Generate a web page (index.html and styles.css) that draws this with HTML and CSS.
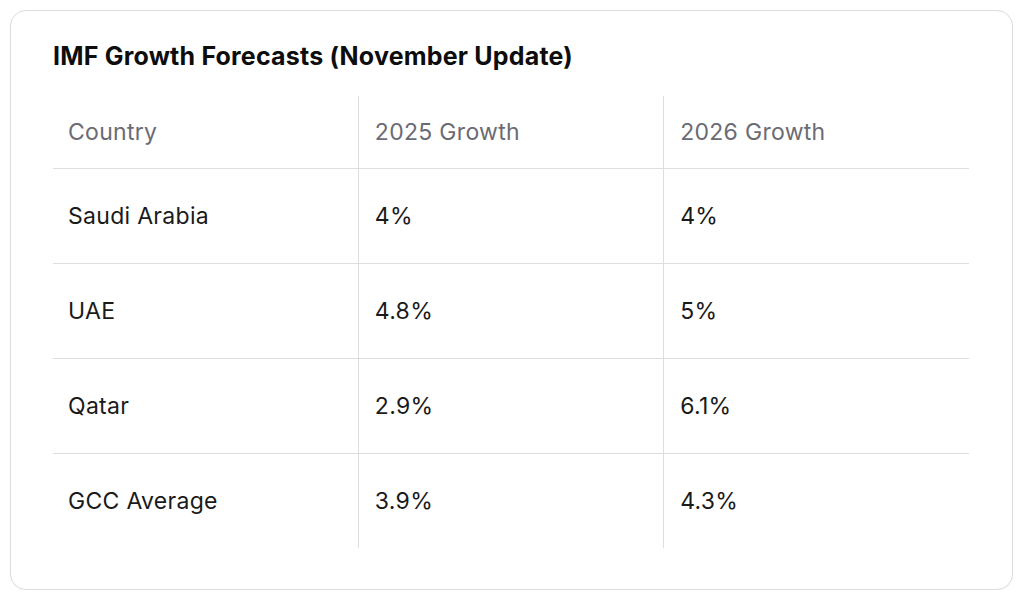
FILE: index.html
```html
<!DOCTYPE html>
<html lang="en">
<head>
<meta charset="utf-8">
<title>IMF Growth Forecasts</title>
<link rel="stylesheet" href="styles.css">
</head>
<body>
  <div class="card">
    <h2 class="title">IMF Growth Forecasts (November Update)</h2>
    <table class="data">
      <thead>
        <tr>
          <th>Country</th>
          <th>2025 Growth</th>
          <th>2026 Growth</th>
        </tr>
      </thead>
      <tbody>
        <tr><td>Saudi Arabia</td><td>4%</td><td>4%</td></tr>
        <tr><td>UAE</td><td>4.8%</td><td>5%</td></tr>
        <tr><td>Qatar</td><td>2.9%</td><td>6.1%</td></tr>
        <tr><td>GCC Average</td><td>3.9%</td><td>4.3%</td></tr>
      </tbody>
    </table>
  </div>
</body>
</html>
```
FILE: styles.css
```css
html, body {
  margin: 0;
  padding: 0;
  background: #ffffff;
}
body {
  font-family: Inter, "Noto Sans", "Liberation Sans", sans-serif;
  color: #1a1a1a;
}
.card {
  box-sizing: border-box;
  margin: 10px 0 0 10px;
  width: 1003px;
  height: 580px;
  border: 1.5px solid #dcdcdc;
  border-radius: 16px;
  padding: 29px 43px 0 42px;
  box-shadow: 0 1px 2px rgba(0,0,0,0.04);
}
.title {
  margin: 0 0 24px 0;
  font-size: 25px;
  line-height: 32px;
  font-weight: 700;
  color: #0d0d0d;
  letter-spacing: 0.2px;
}
.data {
  width: 916px;
  border-collapse: collapse;
  table-layout: fixed;
}
.data th, .data td {
  text-align: left;
  padding: 0 0 0 15px;
  font-size: 23px;
  line-height: 28px;
  letter-spacing: 0.3px;
  vertical-align: middle;
}
.data th + th, .data td + td {
  border-left: 1.5px solid #dedede;
  padding-left: 16px;
}
.data th {
  font-weight: 400;
  color: #6b6b73;
  height: 72px;
}
.data td {
  color: #1a1a1a;
  height: 94px;
}
.data thead tr, .data tbody tr {
  border-bottom: 1.5px solid #dedede;
}
.data tbody tr:last-child {
  border-bottom: none;
}
```
